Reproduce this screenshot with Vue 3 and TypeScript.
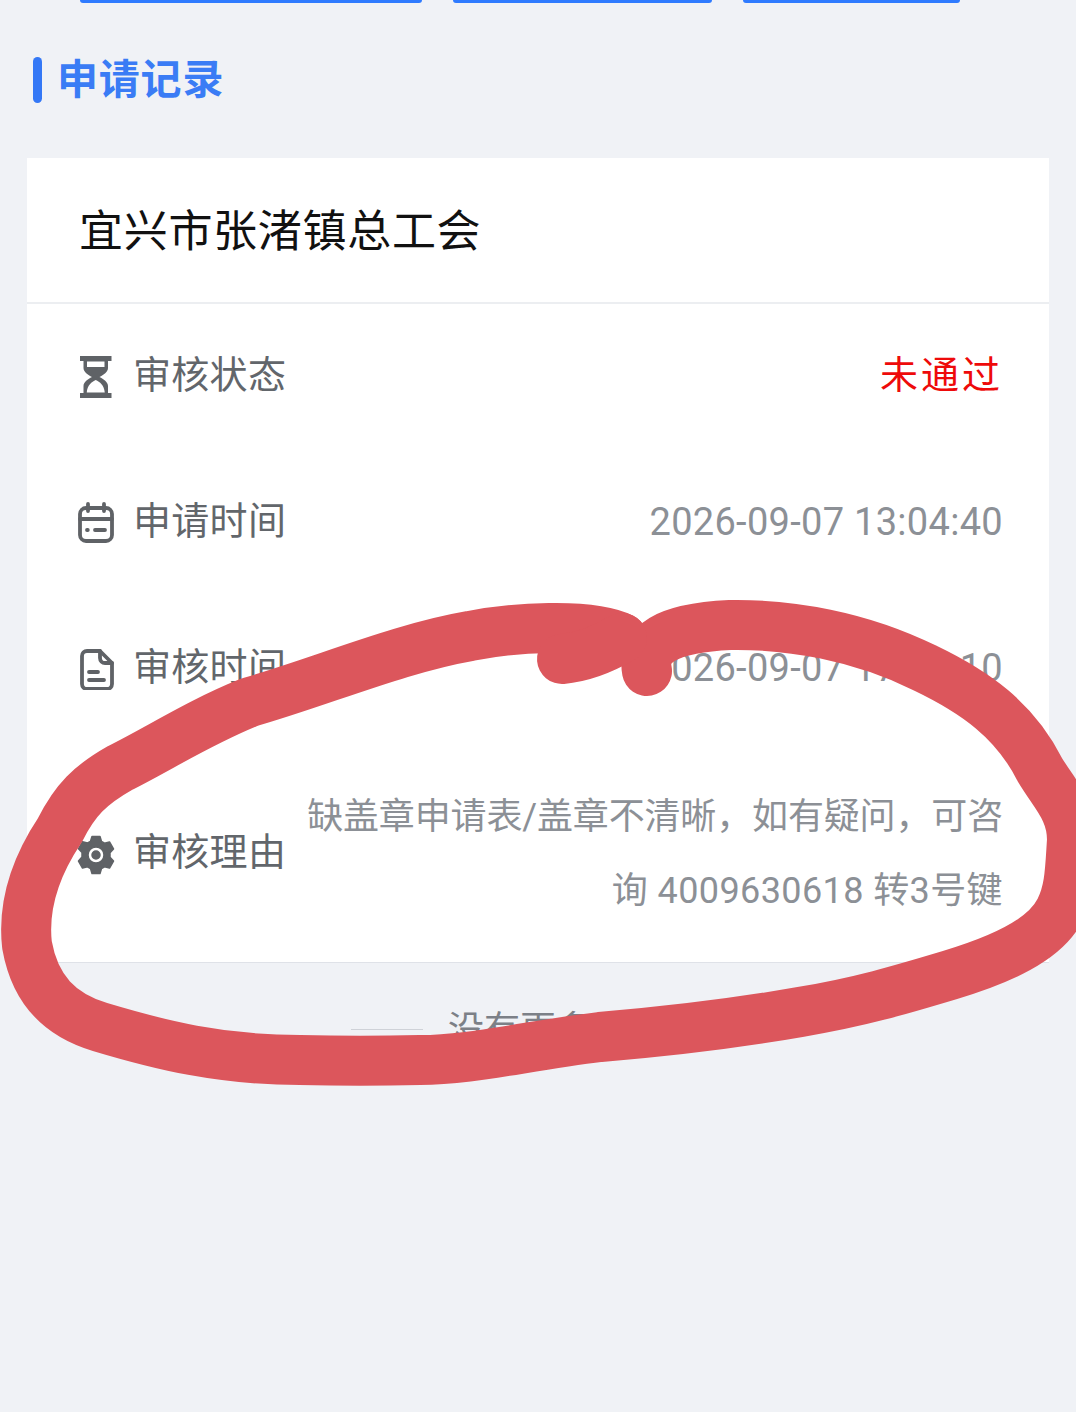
<script setup lang="ts">
interface Row { label: string; value: string[]; icon: string; tone?: string; kind: string }
const rows: Row[] = [
  { label: '审核状态', value: ['未通过'], icon: 'hourglass', tone: 'danger', kind: 'short' },
  { label: '申请时间', value: ['2026-09-07 13:04:40'], icon: 'calendar', kind: 'short' },
  { label: '审核时间', value: ['2026-09-07 17:30:10'], icon: 'file', kind: 'short' },
  { label: '审核理由', value: ['缺盖章申请表/盖章不清晰，如有疑问，可咨', '询 4009630618 转3号键'], icon: 'gear', kind: 'long' },
]
</script>

<template>
  <main class="page">
    <div class="tabs">
      <span class="tab t1"></span>
      <span class="tab t2"></span>
      <span class="tab t3"></span>
    </div>

    <h2 class="heading"><i class="accent"></i><span class="heading-text">申请记录</span></h2>

    <section class="card">
      <header class="card-title"><span>宜兴市张渚镇总工会</span></header>
      <div v-for="r in rows" :key="r.label" class="row" :class="r.kind">
        <div class="left">
          <span class="icon">
            <svg v-if="r.icon === 'hourglass'" viewBox="0 0 38 42" width="38" height="42">
              <path fill="#5f6266" fill-rule="evenodd" d="M3 0h31.500v5H31v7c0 4-4.500 7-8.500 9 4 2 8.500 5 8.500 9v7h3.500v5H3v-5h3.500v-7c0-4 4.500-7 8.500-9-4-2-8.500-5-8.500-9V5H3zM10 5.500V11h17.500V5.500zM18.750 24c-4 2-8.500 5-9 12.500h18c-.5-7.500-5-10.500-9-12.500z"/>
            </svg>
            <svg v-else-if="r.icon === 'calendar'" viewBox="0 0 38 42" width="38" height="42">
              <g fill="none" stroke="#5f6266" stroke-width="3.800" stroke-linecap="round">
                <rect x="3" y="6" width="32" height="33" rx="6"/>
                <path d="M3 17h32M11 2v7M27 2v7"/>
                <path d="M10 28h.8M18 28h10"/>
              </g>
            </svg>
            <svg v-else-if="r.icon === 'file'" viewBox="0 0 38 42" width="38" height="42">
              <g fill="none" stroke="#5f6266" stroke-width="3.800" stroke-linecap="round" stroke-linejoin="round">
                <path d="M10 3h13l12 12v21a5 5 0 0 1-5 5H10a5 5 0 0 1-5-5V8a5 5 0 0 1 5-5z"/>
                <path d="M23 3v7a5 5 0 0 0 5 5h7"/>
                <path d="M12 24h9M12 32h15"/>
              </g>
            </svg>
            <svg v-else viewBox="0 0 38 40" width="38" height="40">
              <path fill="#5f6266" stroke="#5f6266" stroke-width="1.500" stroke-linejoin="round" fill-rule="evenodd" d="M15 1.500h8l1.500 5 3 1.700 5-1.300 4 7-3.500 3.800v4.600l3.500 3.800-4 7-5-1.300-3 1.700-1.500 5h-8l-1.500-5-3-1.700-5 1.300-4-7L5 22.100v-4.600L1.500 13.700l4-7 5 1.300 3-1.700zM19 12a8 8 0 1 0 0 16 8 8 0 0 0 0-16zM19 16a4 4 0 1 1 0 8 4 4 0 0 1 0-8z"/>
            </svg>
          </span>
          <span class="label">{{ r.label }}</span>
        </div>
        <div class="value" :class="r.tone">
          <div v-for="line in r.value" :key="line">{{ line }}</div>
        </div>
      </div>
    </section>

    <footer class="end">
      <i class="rule"></i>
      <span class="end-text">没有更多了</span>
      <i class="rule"></i>
    </footer>

    <svg class="scribble" viewBox="0 0 1076 1412" width="1076" height="1412" aria-hidden="true">
      <g fill="none" stroke="#dc565c" stroke-width="50" stroke-linecap="round" stroke-linejoin="round">
        <path d="M647 671C642 645 665 628 730 625C790 624 860 636 925 668C975 692 1015 720 1040 770C1055 795 1072 810 1072 840C1070 870 1070 890 1060 910C1045 940 1000 960 950 975C900 990 860 1002 800 1012C720 1026 660 1032 600 1037C520 1047 470 1060 420 1060C380 1061 340 1061 300 1060C220 1060 160 1045 100 1027C60 1015 35 990 27 945C22 900 40 860 60 830C75 800 90 785 120 768C160 748 200 722 250 702C320 682 400 648 470 636C510 628 590 622 622 638"/>
        <path d="M562 659C585 657 605 648 622 638"/>
      </g>
    </svg>
  </main>
</template>

<style scoped>
.page {
  position: relative;
  width: 1076px;
  height: 1412px;
  overflow: hidden;
  background: #f0f2f6;
  font-family: "Noto Sans CJK SC", "Noto Sans", sans-serif;
}
.tabs {
  display: flex;
  gap: 31px;
  height: 3px;
  padding-left: 80px;
}
.tab {
  height: 3px;
  background: #2f7bff;
  border-radius: 0 0 6px 6px;
}
.t1 { width: 342px; }
.t2 { width: 259px; }
.t3 { width: 217px; }
.heading {
  display: flex;
  align-items: center;
  gap: 15px;
  height: 46px;
  margin: 54px 0 0 33px;
  font-size: 41px;
  font-weight: 700;
  line-height: 46px;
  color: #3a7cf5;
}
.heading-text {
  padding-bottom: 8px;
  letter-spacing: 0.8px;
}
.accent {
  width: 9px;
  height: 46px;
  border-radius: 5px;
  background: #3478f6;
}
.card {
  width: 1022px;
  margin: 55px 0 0 27px;
  background: #fff;
  border-bottom: 1px solid #dfe2e8;
}
.card-title {
  height: 146px;
  padding: 0 0 4px 52px;
  box-sizing: border-box;
  display: flex;
  align-items: center;
  font-size: 44px;
  letter-spacing: 0.7px;
  color: #111;
  border-bottom: 2px solid #eceef1;
}
.row {
  display: flex;
  align-items: center;
  justify-content: space-between;
  padding: 0 46px 0 50px;
}
.short { height: 146px; }
.long { height: 220px; }
.long .left { padding-top: 5px; }
.left {
  display: flex;
  align-items: center;
  gap: 18px;
  flex: none;
}
.icon {
  width: 38px;
  height: 42px;
  display: flex;
  align-items: center;
  justify-content: center;
}
.label {
  font-size: 38px;
  letter-spacing: 0.3px;
  color: #62666b;
  white-space: nowrap;
  padding-bottom: 12px;
}
.value {
  font-family: Roboto, "Noto Sans CJK SC", sans-serif;
  font-size: 38px;
  letter-spacing: 0.3px;
  color: #8c9096;
  text-align: right;
  padding-bottom: 2px;
}
.value.danger {
  color: #ee0a0a;
  font-family: "Noto Sans CJK SC", sans-serif;
  letter-spacing: 3px;
  padding-bottom: 12px;
}
.long .value {
  font-size: 36px;
  letter-spacing: -0.15px;
  line-height: 74px;
  white-space: nowrap;
  padding: 4px 0 0;
}
.long .value div:last-child {
  letter-spacing: 0.4px;
}
.end {
  display: flex;
  align-items: center;
  justify-content: center;
  gap: 25px;
  height: 46px;
  margin: 43px 0 0;
  font-size: 36px;
  color: #7c8087;
}
.end-text {
  padding-bottom: 6px;
}
.rule {
  width: 72px;
  height: 1px;
  background: #cfd2d8;
}
.scribble {
  position: absolute;
  left: 0;
  top: 0;
  pointer-events: none;
}
</style>
